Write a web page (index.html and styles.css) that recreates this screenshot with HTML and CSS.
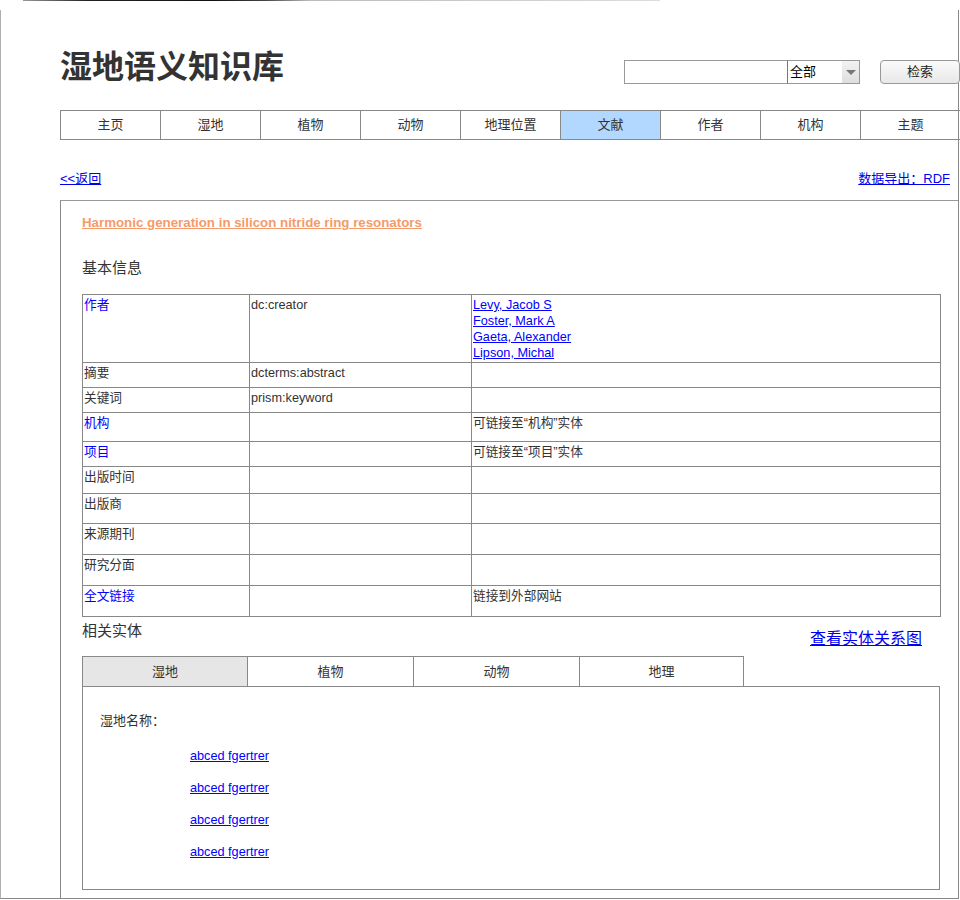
FILE: index.html
```html
<!DOCTYPE html>
<html lang="zh-CN">
<head>
<meta charset="utf-8">
<title>湿地语义知识库</title>
<link rel="stylesheet" href="styles.css">
</head>
<body>
<div class="topstrip"><div class="topline"></div></div>
<div class="window">
  <header class="header">
    <h1 class="title">湿地语义知识库</h1>
    <div class="search">
      <div class="search-input"></div>
      <div class="search-select"><span class="sel-text">全部</span><span class="sel-arrow"><span class="tri"></span></span></div>
      <div class="search-btn">检索</div>
    </div>
  </header>
  <nav class="nav">
    <div class="nav-item">主页</div>
    <div class="nav-item">湿地</div>
    <div class="nav-item">植物</div>
    <div class="nav-item">动物</div>
    <div class="nav-item">地理位置</div>
    <div class="nav-item active">文献</div>
    <div class="nav-item">作者</div>
    <div class="nav-item">机构</div>
    <div class="nav-item last">主题</div>
  </nav>
  <div class="linkrow">
    <a href="#" class="lnk">&lt;&lt;返回</a>
    <a href="#" class="lnk">数据导出：RDF</a>
  </div>
  <main class="panel">
    <a href="#" class="doc-title">Harmonic generation in silicon nitride ring resonators</a>
    <h2 class="section">基本信息</h2>
    <table class="info">
      <colgroup><col class="c1"><col class="c2"><col class="c3"></colgroup>
      <tr class="r68"><td class="key">作者</td><td>dc:creator</td><td><a href="#" class="au">Levy, Jacob S</a><br><a href="#" class="au">Foster, Mark A</a><br><a href="#" class="au">Gaeta, Alexander</a><br><a href="#" class="au">Lipson, Michal</a></td></tr>
      <tr class="r25"><td>摘要</td><td>dcterms:abstract</td><td></td></tr>
      <tr class="r25"><td>关键词</td><td>prism:keyword</td><td></td></tr>
      <tr class="r29"><td class="key">机构</td><td></td><td>可链接至“机构”实体</td></tr>
      <tr class="r25"><td class="key">项目</td><td></td><td>可链接至“项目”实体</td></tr>
      <tr class="r27"><td>出版时间</td><td></td><td></td></tr>
      <tr class="r30"><td>出版商</td><td></td><td></td></tr>
      <tr class="r31"><td>来源期刊</td><td></td><td></td></tr>
      <tr class="r31"><td>研究分面</td><td></td><td></td></tr>
      <tr class="r31"><td class="key">全文链接</td><td></td><td>链接到外部网站</td></tr>
    </table>
    <div class="related-head">
      <h2 class="section rel">相关实体</h2>
      <a href="#" class="graph-link">查看实体关系图</a>
    </div>
    <div class="tabs">
      <div class="tab active">湿地</div>
      <div class="tab">植物</div>
      <div class="tab">动物</div>
      <div class="tab">地理</div>
    </div>
    <div class="tab-panel">
      <div class="field">湿地名称：</div>
      <ul class="ent-list">
        <li><a href="#" class="ent">abced fgertrer</a></li>
        <li><a href="#" class="ent">abced fgertrer</a></li>
        <li><a href="#" class="ent">abced fgertrer</a></li>
        <li><a href="#" class="ent">abced fgertrer</a></li>
      </ul>
    </div>
  </main>
</div>
</body>
</html>
```
FILE: styles.css
```css
html, body {
  margin: 0;
  padding: 0;
  background: #fff;
}
body {
  font-family: "Liberation Sans", "Noto Sans CJK SC", sans-serif;
  color: #333;
  width: 960px;
  height: 900px;
  overflow: hidden;
}
.topstrip {
  height: 10px;
}
.topline {
  margin-left: 23px;
  width: 637px;
  height: 1px;
  background: linear-gradient(to right, #999 0%, #222 10%, #111 30%, #444 38%, #bbb 45%, #ddd 100%);
}
.window {
  box-sizing: border-box;
  width: 959px;
  height: 889px;
  border-left: 1px solid #b0b0b0;
  border-right: 1px solid #888;
  border-bottom: 1px solid #888;
  padding-left: 59px;
  display: flex;
  flex-direction: column;
}
.header {
  width: 900px;
  flex: none;
  display: flex;
  justify-content: space-between;
  align-items: flex-start;
  margin-top: 38px;
}
.title {
  margin: 0;
  font-family: "Noto Sans CJK SC", sans-serif;
  font-size: 32px;
  line-height: 32px;
  font-weight: 700;
  color: #333;
}
.search {
  margin-top: 12px;
  display: flex;
  align-items: flex-start;
}
.search-input {
  box-sizing: border-box;
  width: 163px;
  height: 24px;
  border: 1px solid #999;
  border-right: none;
  background: #fff;
}
.search-select {
  box-sizing: border-box;
  width: 73px;
  height: 24px;
  border: 1px solid #999;
  border-left: 1px solid #777;
  display: flex;
  font-size: 13px;
  color: #000;
}
.sel-text {
  flex: 1;
  padding-left: 2px;
  line-height: 22px;
}
.sel-arrow {
  width: 17px;
  background: linear-gradient(#f2f2f2, #dedede);
  display: flex;
  align-items: center;
  justify-content: center;
}
.tri {
  width: 0;
  height: 0;
  border-left: 5px solid transparent;
  border-right: 5px solid transparent;
  border-top: 5px solid #777;
}
.search-btn {
  box-sizing: border-box;
  margin-left: 20px;
  width: 80px;
  height: 24px;
  border: 1px solid #999;
  border-radius: 4px;
  background: linear-gradient(#fafafa, #e8e8e8);
  font-size: 13px;
  line-height: 22px;
  text-align: center;
  color: #222;
}
.nav {
  flex: none;
  width: 901px;
  margin-top: 26px;
  box-sizing: border-box;
  height: 30px;
  display: grid;
  grid-template-columns: repeat(8, 100px) 99px;
  border: 1px solid #888;
}
.nav-item {
  border-right: 1px solid #888;
  font-size: 13px;
  line-height: 28px;
  text-align: center;
  color: #333;
}
.nav-item.last {
  border-right: none;
}
.nav-item.active {
  background: #b3d8ff;
}
.linkrow {
  flex: none;
  width: 890px;
  margin-top: 31px;
  display: flex;
  justify-content: space-between;
  font-size: 13px;
  line-height: 16px;
}
.lnk {
  color: #0000ee;
  text-decoration: underline;
}
.panel {
  flex: 1;
  margin-top: 13px;
  border-left: 1px solid #888;
  border-top: 1px solid #999;
  padding: 14px 0 0 21px;
  display: flex;
  flex-direction: column;
  align-items: flex-start;
}
.doc-title {
  font-size: 13.3px;
  font-weight: 700;
  line-height: 16px;
  color: #f59a6a;
  text-decoration: underline;
}
.section {
  margin: 27px 0 0 0;
  font-size: 15px;
  font-weight: 400;
  line-height: 20px;
  color: #333;
}
.info {
  margin-top: 16px;
  border-collapse: collapse;
  width: 858px;
  table-layout: fixed;
  font-size: 12.7px;
  line-height: 16px;
}
.c1 { width: 167px; }
.c2 { width: 222px; }
.c3 { width: 469px; }
.info td {
  border: 1px solid #888;
  vertical-align: top;
  padding: 2px 1px 0 1px;
  color: #333;
}
.info td.key {
  color: #0000ff;
}
.au {
  color: #0000ff;
  text-decoration: underline;
}
.r68 { height: 68px; }
.r25 { height: 25px; }
.r27 { height: 27px; }
.r29 { height: 29px; }
.r30 { height: 30px; }
.r31 { height: 31px; }
.related-head {
  width: 858px;
  display: flex;
  justify-content: space-between;
  align-items: flex-start;
}
.section.rel {
  margin-top: 4px;
}
.graph-link {
  margin-top: 13px;
  margin-right: 18px;
  font-size: 16px;
  line-height: 18px;
  color: #0000ee;
  text-decoration: underline;
}
.tabs {
  margin-top: 8px;
  display: flex;
  height: 30px;
  box-sizing: border-box;
}
.tab {
  box-sizing: border-box;
  width: 166px;
  height: 30px;
  border: 1px solid #888;
  border-bottom: none;
  border-left: none;
  font-size: 13px;
  line-height: 29px;
  text-align: center;
  color: #333;
}
.tab:first-child {
  border-left: 1px solid #888;
}
.tab:last-child {
  width: 164px;
}
.tab.active {
  background: #e6e6e6;
}
.tab-panel {
  box-sizing: border-box;
  width: 858px;
  height: 204px;
  border: 1px solid #888;
  padding: 26px 0 0 17px;
}
.field {
  font-size: 13px;
  line-height: 16px;
  color: #333;
}
.ent-list {
  list-style: none;
  margin: 19px 0 0 0;
  padding: 0 0 0 90px;
  font-size: 12.7px;
  line-height: 16px;
}
.ent-list li {
  margin-bottom: 16px;
}
.ent {
  color: #0000ff;
  text-decoration: underline;
}
```
